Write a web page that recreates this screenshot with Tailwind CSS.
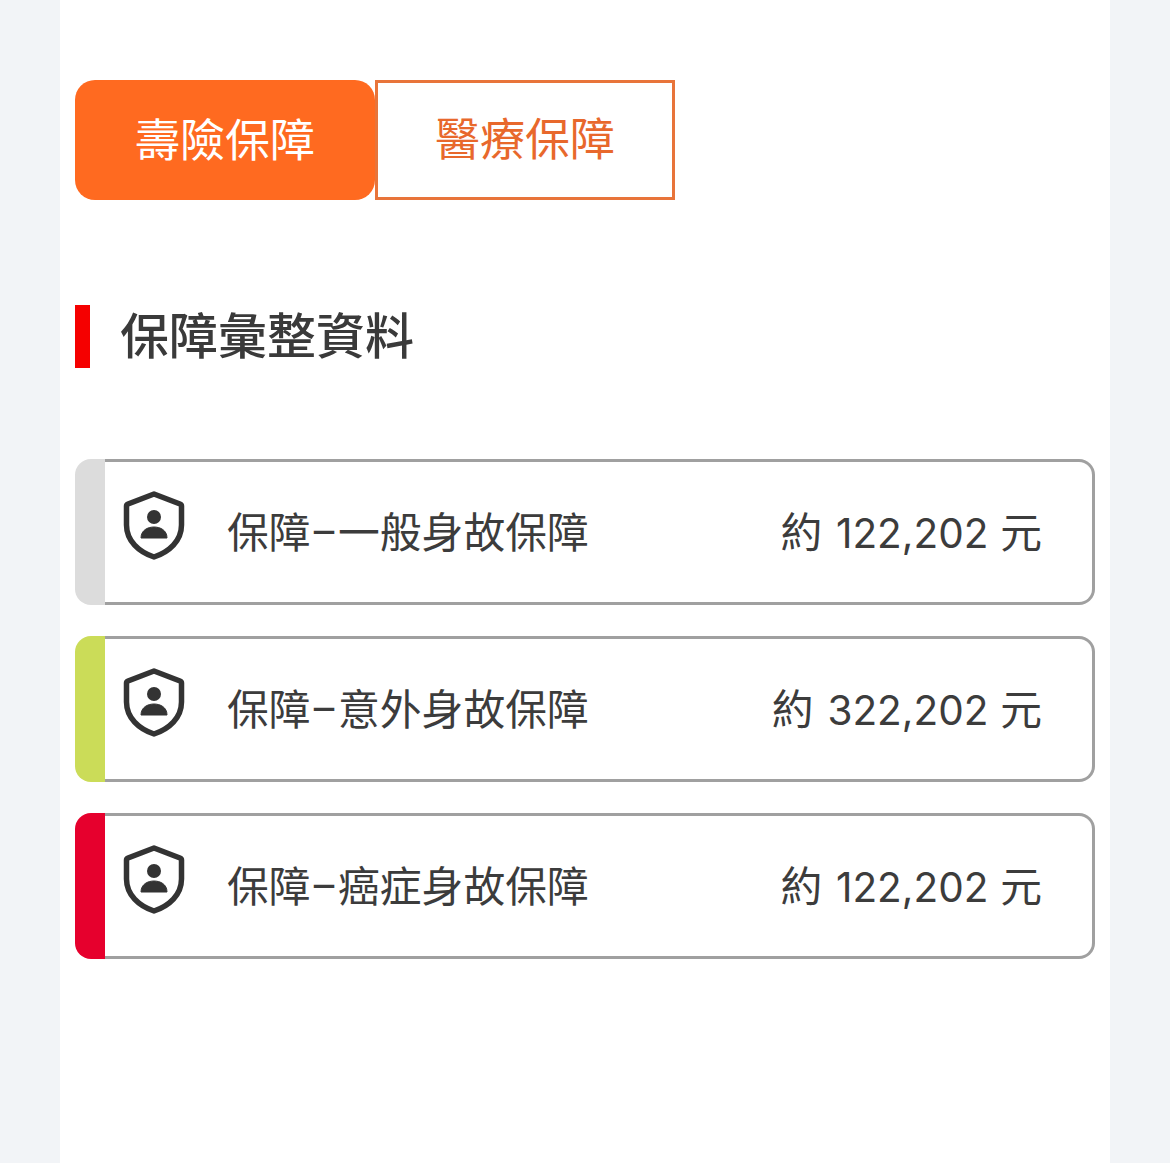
<!DOCTYPE html>
<html lang="zh-Hant">
<head>
  <meta charset="UTF-8">
  <meta name="viewport" content="width=device-width, initial-scale=1.0">
  <title>保障彙整資料</title>
  <script src="https://cdn.jsdelivr.net/npm/@tailwindcss/browser@4"></script>
</head>
<body class="bg-[#f2f4f7] font-['Inter','Noto_Sans_CJK_TC',sans-serif]">
  <main class="mx-[60px] h-[1163px] overflow-hidden bg-white px-[15px] pt-[80px]">

    <div class="flex">
      <button class="flex h-[120px] w-[300px] items-center justify-center rounded-[20px] bg-[#ff6a20] pt-[2px] text-[45px] text-white">壽險保障</button>
      <button class="flex h-[120px] w-[300px] items-center justify-center border-[3px] border-[#e8743a] text-[45px] text-[#e8682c]">醫療保障</button>
    </div>

    <div class="mt-[105px] flex h-[63px] items-center border-l-[15px] border-[#f50000] pl-[30px]">
      <h2 class="text-[49px] font-medium leading-none text-[#3a3a3a]">保障彙整資料</h2>
    </div>

    <div class="mt-[91px] flex flex-col gap-[31px]">
      <div class="flex h-[146px]">
        <div class="w-[30px] shrink-0 rounded-l-[16px] bg-[#dcdcdc]"></div>
        <div class="flex flex-1 items-center rounded-r-[16px] border-y-[3px] border-r-[3px] border-[#a0a0a0] pl-[17px] pr-[50px]">
          <svg class="mb-[14px] h-[70px] w-[64px] shrink-0" viewBox="0 0 64 70" fill="none">
            <path d="M32 4 L58 14 Q59.500 14.600 59.500 16 V35 C59.500 51 47 62 32 67 C17 62 4.500 51 4.500 35 V16 Q4.500 14.600 6 14 Z" stroke="#333" stroke-width="5.500" stroke-linejoin="round"/>
            <circle cx="32" cy="27" r="7" fill="#333"/>
            <path d="M19 48 C19 40 26 37 32 37 C38 37 45 40 45 48 Z" fill="#333" stroke="#333" stroke-width="1" stroke-linejoin="round"/>
          </svg>
          <span class="ml-[41px] mt-[4px] font-['Roboto','Noto_Sans_CJK_TC',sans-serif] text-[41.8px] text-[#3c3c3c]">保障–一般身故保障</span>
          <span class="ml-auto mt-[2px] text-[41.8px] text-[#3c3c3c]">約 <span class="ml-[2px] text-[40.5px]">122,202</span> 元</span>
        </div>
      </div>

      <div class="flex h-[146px]">
        <div class="w-[30px] shrink-0 rounded-l-[16px] bg-[#cbdc58]"></div>
        <div class="flex flex-1 items-center rounded-r-[16px] border-y-[3px] border-r-[3px] border-[#a0a0a0] pl-[17px] pr-[50px]">
          <svg class="mb-[14px] h-[70px] w-[64px] shrink-0" viewBox="0 0 64 70" fill="none">
            <path d="M32 4 L58 14 Q59.500 14.600 59.500 16 V35 C59.500 51 47 62 32 67 C17 62 4.500 51 4.500 35 V16 Q4.500 14.600 6 14 Z" stroke="#333" stroke-width="5.500" stroke-linejoin="round"/>
            <circle cx="32" cy="27" r="7" fill="#333"/>
            <path d="M19 48 C19 40 26 37 32 37 C38 37 45 40 45 48 Z" fill="#333" stroke="#333" stroke-width="1" stroke-linejoin="round"/>
          </svg>
          <span class="ml-[41px] mt-[4px] font-['Roboto','Noto_Sans_CJK_TC',sans-serif] text-[41.8px] text-[#3c3c3c]">保障–意外身故保障</span>
          <span class="ml-auto mt-[2px] text-[41.8px] text-[#3c3c3c]">約 <span class="ml-[2px] text-[40.5px]">322,202</span> 元</span>
        </div>
      </div>

      <div class="flex h-[146px]">
        <div class="w-[30px] shrink-0 rounded-l-[16px] bg-[#e6002d]"></div>
        <div class="flex flex-1 items-center rounded-r-[16px] border-y-[3px] border-r-[3px] border-[#a0a0a0] pl-[17px] pr-[50px]">
          <svg class="mb-[14px] h-[70px] w-[64px] shrink-0" viewBox="0 0 64 70" fill="none">
            <path d="M32 4 L58 14 Q59.500 14.600 59.500 16 V35 C59.500 51 47 62 32 67 C17 62 4.500 51 4.500 35 V16 Q4.500 14.600 6 14 Z" stroke="#333" stroke-width="5.500" stroke-linejoin="round"/>
            <circle cx="32" cy="27" r="7" fill="#333"/>
            <path d="M19 48 C19 40 26 37 32 37 C38 37 45 40 45 48 Z" fill="#333" stroke="#333" stroke-width="1" stroke-linejoin="round"/>
          </svg>
          <span class="ml-[41px] mt-[4px] font-['Roboto','Noto_Sans_CJK_TC',sans-serif] text-[41.8px] text-[#3c3c3c]">保障–癌症身故保障</span>
          <span class="ml-auto mt-[2px] text-[41.8px] text-[#3c3c3c]">約 <span class="ml-[2px] text-[40.5px]">122,202</span> 元</span>
        </div>
      </div>
    </div>

  </main>
</body>
</html>
